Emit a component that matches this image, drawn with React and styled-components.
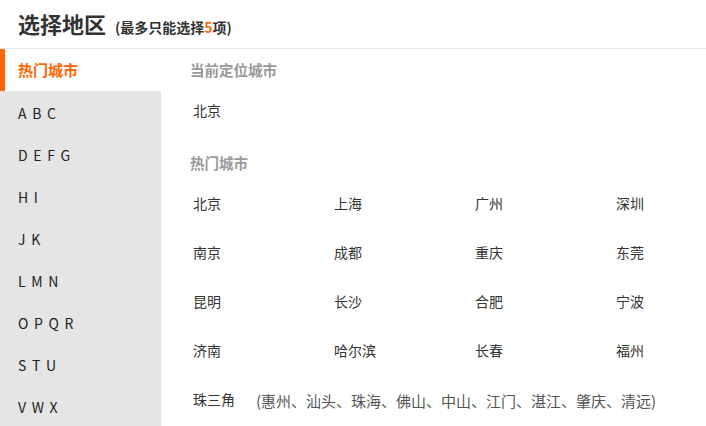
import React from "react";
import styled, { createGlobalStyle } from "styled-components";

const GlobalStyle = createGlobalStyle`
    html, body {
        margin: 0;
        padding: 0;
        background: #ffffff;
        font-family: "Noto Sans CJK SC", "Noto Sans", sans-serif;
    }
`;

const letters = ["A B C", "D E F G", "H I", "J K", "L M N", "O P Q R", "S T U", "V W X"];

const hotCities = [
    "北京", "上海", "广州", "深圳",
    "南京", "成都", "重庆", "东莞",
    "昆明", "长沙", "合肥", "宁波",
    "济南", "哈尔滨", "长春", "福州",
];

function App() {
    return (
        <Page>
            <GlobalStyle />
            <Header>
                <Title>选择地区</Title>
                <Hint>(最多只能选择<em>5</em>项)</Hint>
            </Header>
            <Body>
                <Sidebar>
                    <NavItem active>热门城市</NavItem>
                    {letters.map(l => <NavItem key={l}>{l}</NavItem>)}
                </Sidebar>
                <Content>
                    <SectionTitle>当前定位城市</SectionTitle>
                    <CurrentRow>
                        <City>北京</City>
                    </CurrentRow>
                    <SectionTitle hot>热门城市</SectionTitle>
                    <CityGrid>
                        {hotCities.map(c => <City key={c}>{c}</City>)}
                        <Region>
                            <City>珠三角</City>
                            <RegionList>(惠州、汕头、珠海、佛山、中山、江门、湛江、肇庆、清远)</RegionList>
                        </Region>
                    </CityGrid>
                </Content>
            </Body>
        </Page>
    );
}

const Page = styled.div`
    width: 706px;
    height: 426px;
    overflow: hidden;
    background: #fff;
`;

const Header = styled.div`
    display: flex;
    align-items: baseline;
    height: 49px;
    padding: 0 18px;
    box-sizing: border-box;
    border-bottom: 1px solid #e6e6e6;
    line-height: 46px;
`;

const Title = styled.h1`
    margin: 0;
    font-size: 22px;
    font-weight: bold;
    color: #333;
`;

const Hint = styled.span`
    margin-left: 9px;
    font-size: 14px;
    font-weight: bold;
    color: #333;
    em {
        font-style: normal;
        color: #ff6600;
    }
`;

const Body = styled.div`
    display: flex;
    height: 377px;
`;

const Sidebar = styled.div`
    width: 161px;
    flex-shrink: 0;
    background: #e5e5e5;
`;

const NavItem = styled.div`
    height: 42px;
    line-height: ${({active}) => active ? "42px" : "44px"};
    padding-left: ${({active}) => active ? "13px" : "18px"};
    border-left: ${({active}) => active ? "5px solid #ff6600" : "none"};
    background: ${({active}) => active ? "#fff" : "transparent"};
    color: ${({active}) => active ? "#ff6600" : "#222"};
    font-size: ${({active}) => active ? "15px" : "14px"};
    font-weight: ${({active}) => active ? "bold" : "normal"};
    word-spacing: ${({active}) => active ? "0" : "2.5px"};
`;

const Content = styled.div`
    flex: 1;
    padding-left: 29px;
`;

const SectionTitle = styled.div`
    margin-top: ${({hot}) => hot ? "21px" : "0"};
    height: ${({hot}) => hot ? "30px" : "42px"};
    line-height: ${({hot}) => hot ? "30px" : "42px"};
    font-size: 14.5px;
    font-weight: bold;
    color: #999;
`;

const CurrentRow = styled.div`
    height: 36px;
    line-height: 36px;
`;

const CityGrid = styled.div`
    display: grid;
    grid-template-columns: repeat(4, 141px);
    grid-auto-rows: 49px;
    align-items: center;
`;

const City = styled.span`
    padding-left: 3px;
    font-size: 14px;
    color: #333;
`;

const Region = styled.div`
    grid-column: 1 / -1;
    display: flex;
    align-items: center;
`;

const RegionList = styled.span`
    margin-left: 21px;
    margin-top: 4px;
    font-size: 15px;
    color: #555;
`;

export default App;
